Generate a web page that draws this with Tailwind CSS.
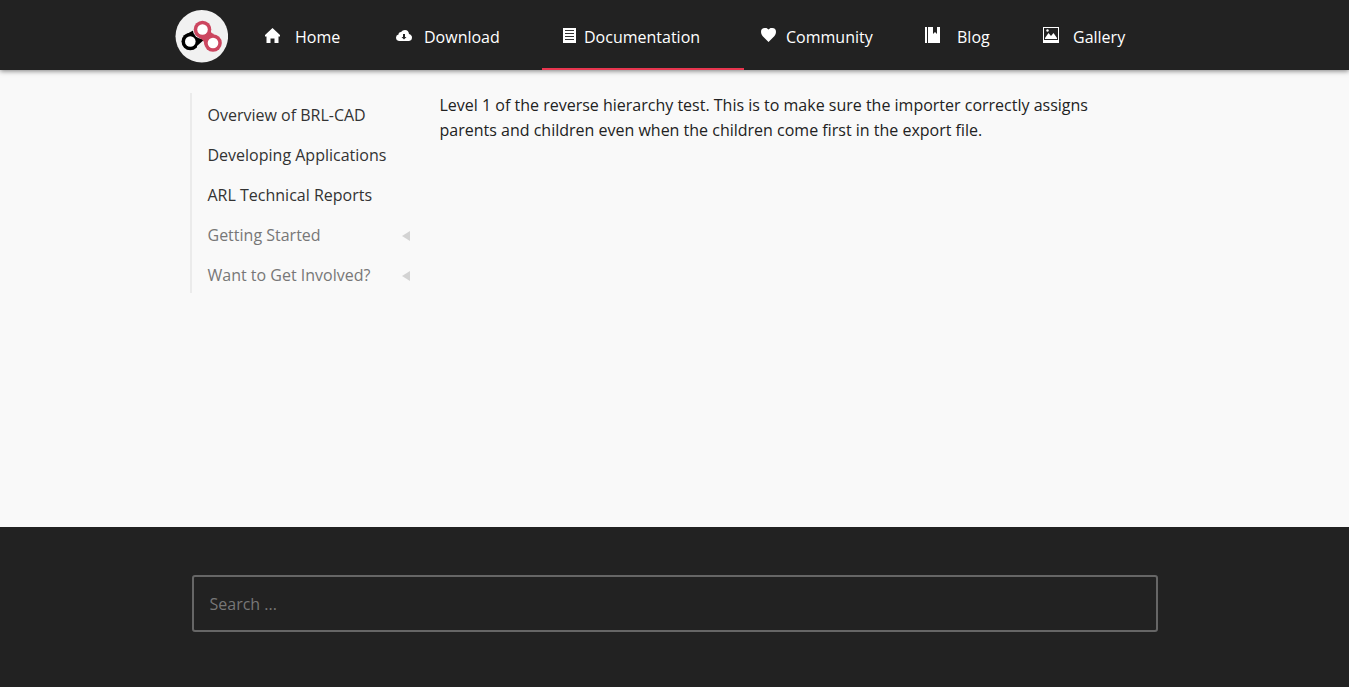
<!DOCTYPE html>
<html lang="en">
<head>
<meta charset="utf-8">
<meta name="viewport" content="width=device-width, initial-scale=1">
<title>BRL-CAD Documentation</title>
<script src="https://cdn.jsdelivr.net/npm/@tailwindcss/browser@4"></script>
</head>
<body class="flex min-h-screen flex-col bg-[#f9f9f9] font-['Open_Sans','Noto_Sans',sans-serif] text-base text-[#222]">
<header class="relative bg-[#222] text-white shadow-[0_1px_5px_rgba(0,0,0,0.5)]">
  <div class="mx-auto flex h-[70px] max-w-[999px]">
    <a href="#" aria-label="BRL-CAD" class="mt-[10px] mr-4 shrink-0">
      <svg class="size-[53px]" viewBox="0 0 53 53">
        <circle cx="26.8" cy="26.3" r="26.3" fill="#f1f1f1"/>
        <path d="M10 25 19 20 29 28 34 31 20 38Z" fill="#000"/>
        <circle cx="15.300" cy="31.500" r="8.800" fill="#000"/>
        <circle cx="27.500" cy="19.500" r="9.700" fill="#f1f1f1"/>
        <path d="M22 39H29L31 28 22 36Z" fill="#f1f1f1"/>
        <path d="M20 24C25 30 29 28 29.500 35L39 24C35 23 36 21 36 17Z" fill="#cc4660"/>
        <circle cx="27.500" cy="19.500" r="8.800" fill="#cc4660"/>
        <circle cx="38" cy="33" r="8.800" fill="#cc4660"/>
        <g fill="#fff"><circle cx="15.300" cy="31.500" r="5.300"/><circle cx="27.500" cy="19.500" r="5.300"/><circle cx="38" cy="33" r="5.300"/></g>
      </svg>
    </a>
    <nav class="flex">
      <a href="#" class="flex w-[131px] items-center border-b-2 border-transparent pt-[6px] pl-[21px]">
        <svg class="mr-[14px] mb-1 size-4 shrink-0" viewBox="0 -1 16 16" fill="#fff"><path d="M7.500 0 15 7v1.500h-1.500V15H9.500v-4.500h-4V15H1.500V8.500H0V7Z"/></svg>Home</a>
      <a href="#" class="flex w-[167px] items-center border-b-2 border-transparent pt-[6px] pl-[21px]">
        <svg class="mr-3 mb-1 size-4 shrink-0" viewBox="0 -1 16 16" fill="#fff" fill-rule="evenodd"><path d="M3 13Q0 12.500 0 9.500 0 7 2.500 6.500 2.500 4 5 4 6.500 2 9 2q3.500 0 4 4Q16 7 16 9.500 16 12.500 13 13ZM7 6v3H5.500L8 11.500 10.500 9H9V6Z"/></svg>Download</a>
      <a href="#" aria-current="page" class="flex w-[202px] items-center border-b-2 border-[#e8364f] pt-[6px] pl-[21px]">
        <svg class="mr-2 mb-1 h-4 w-[13px] shrink-0" viewBox="0 -1 13 16"><path fill="#fff" d="M0 0h13v15H0Z"/><path stroke="#333" d="M2 2.500h9M2 5.500h9M2 8.500h9M2 11.500h9"/></svg>Documentation</a>
      <a href="#" class="flex w-[160px] items-center border-b-2 border-transparent pt-[6px] pl-[17px]">
        <svg class="mr-[9px] mb-1 size-4 shrink-0" viewBox="0 -1 16 16" fill="#fff"><path d="M7.500 14 1.500 8Q0 6 0 4 0 0 3.800 0H5.500L7.500 1.500 9.500 0h1.700Q15 0 15 4q0 2-1.500 4Z"/></svg>Community</a>
      <a href="#" class="flex w-[118px] items-center border-b-2 border-transparent pt-[6px] pl-[21px]">
        <svg class="mr-4 mb-1 size-4 shrink-0" viewBox="0 0 16 16" fill="#fff"><path d="M0 0h2v16H0ZM3 0h5v7l2-2 2 2V0h3v16H3Z"/></svg>Blog</a>
      <a href="#" class="flex items-center border-b-2 border-transparent pt-[6px] pl-[21px]">
        <svg class="mr-[14px] mb-1 size-4 shrink-0" viewBox="0 0 16 16" fill="#fff"><path fill-rule="evenodd" d="M0 0h16v16H0ZM1 1v13h14V1Z"/><path d="M2 12V11l3.500-5L8 9l2.500-3L14 11v1ZM0 13h16v3H0Z"/><circle cx="4.500" cy="3.500" r="1.200"/></svg>Gallery</a>
    </nav>
  </div>
</header>
<main class="mx-auto flex w-full max-w-[970px] flex-1 pt-[23px]">
  <nav aria-label="Documentation" class="mr-5 w-[230px] shrink-0 self-start border-l-2 border-[#ebebeb] pl-4 text-[#333]">
    <ul class="leading-10">
      <li class="h-10"><a href="#" class="block pt-[2px]">Overview of BRL-CAD</a></li>
      <li class="h-10"><a href="#" class="block pt-[2px]">Developing Applications</a></li>
      <li class="h-10"><a href="#" class="block pt-[2px]">ARL Technical Reports</a></li>
      <li class="h-10"><button class="flex w-full items-center justify-between pt-[2px] pr-[10px] text-[#777]">Getting Started<svg class="mt-[2px] h-[10px] w-2" viewBox="0 0 8 10" fill="#d3d3d3"><path d="M8 0v10L0 5Z"/></svg></button></li>
      <li class="h-10"><button class="flex w-full items-center justify-between pt-[2px] pr-[10px] text-[#777]">Want to Get Involved?<svg class="mt-[2px] h-[10px] w-2" viewBox="0 0 8 10" fill="#d3d3d3"><path d="M8 0v10L0 5Z"/></svg></button></li>
    </ul>
  </nav>
  <p class="max-w-[700px] leading-[25px]">Level 1 of the reverse hierarchy test. This is to make sure the importer correctly assigns parents and children even when the children come first in the export file.</p>
</main>
<footer class="bg-[#222] pt-12 pb-[55px]">
  <form role="search" class="mx-auto max-w-[966px]">
    <input type="search" aria-label="Search" placeholder="Search ..." class="block h-[57px] w-full rounded-[3px] border-2 border-[#666] bg-transparent px-4 text-white placeholder:text-[#777]">
  </form>
</footer>
</body>
</html>
